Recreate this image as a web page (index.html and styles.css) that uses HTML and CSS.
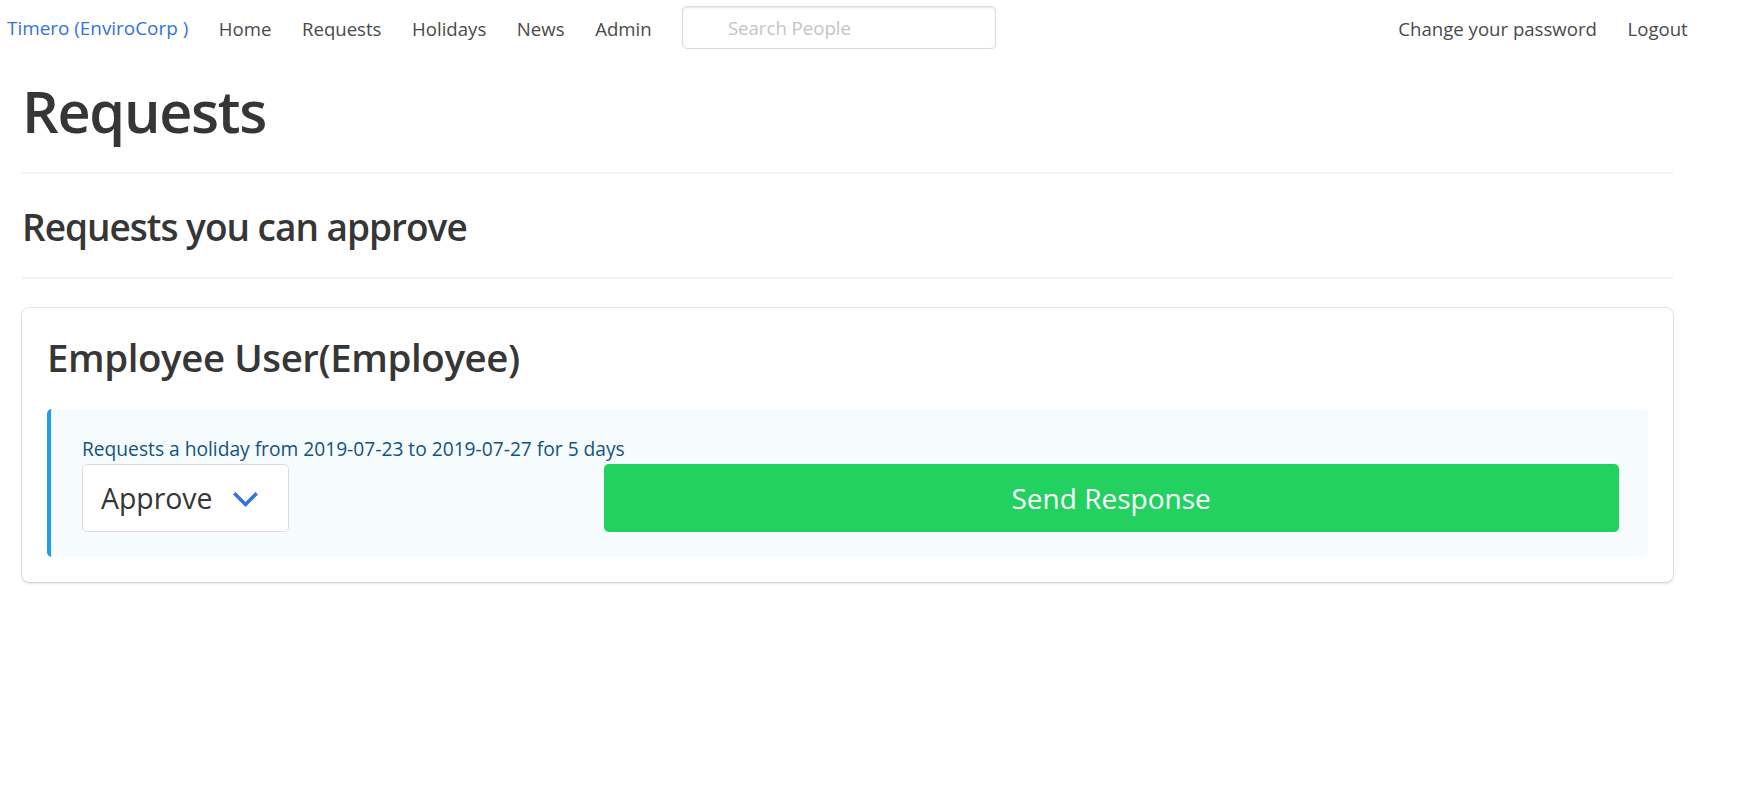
FILE: index.html
```html
<!DOCTYPE html>
<html lang="en">
<head>
<meta charset="utf-8">
<title>Requests</title>
<link rel="stylesheet" href="styles.css">
</head>
<body>
<nav class="navbar">
  <div class="navbar-start">
    <a class="navbar-brand" href="#">Timero (EnviroCorp )</a>
    <a class="navbar-item" href="#">Home</a>
    <a class="navbar-item" href="#">Requests</a>
    <a class="navbar-item" href="#">Holidays</a>
    <a class="navbar-item" href="#">News</a>
    <a class="navbar-item" href="#">Admin</a>
    <div class="search-wrap">
      <input class="search-input" type="text" placeholder="Search People">
    </div>
  </div>
  <div class="navbar-end">
    <a class="navbar-item" href="#">Change your password</a>
    <a class="navbar-item" href="#">Logout</a>
  </div>
</nav>

<main class="page">
  <h1 class="title-main">Requests</h1>
  <hr class="divider">
  <h2 class="title-sub">Requests you can approve</h2>
  <hr class="divider">

  <section class="box">
    <h3 class="box-title">Employee User(Employee)</h3>
    <div class="message">
      <p class="message-text">Requests a holiday from 2019-07-23 to 2019-07-27 for 5 days</p>
      <div class="response-row">
        <div class="select-cell">
          <div class="select-wrap">
            <select class="select-input">
              <option>Approve</option>
              <option>Decline</option>
            </select>
            <svg class="select-arrow" width="27" height="17" viewBox="0 0 27 17" aria-hidden="true">
              <polyline points="2.3,2.3 13.5,13.5 24.7,2.3" fill="none" stroke="#3273dc" stroke-width="3.5" stroke-linejoin="miter" stroke-linecap="butt"/>
            </svg>
          </div>
        </div>
        <button class="send-button" type="button">Send Response</button>
      </div>
    </div>
  </section>
</main>
</body>
</html>
```
FILE: styles.css
```css
* {
  box-sizing: border-box;
}

html, body {
  margin: 0;
  padding: 0;
  background: #ffffff;
}

body {
  font-family: "Open Sans", "Noto Sans", "Liberation Sans", sans-serif;
  font-size: 19.2px;
  color: #4a4a4a;
  line-height: 1.5;
}

a {
  text-decoration: none;
}

/* ---------- navbar ---------- */
.navbar {
  display: flex;
  align-items: center;
  justify-content: space-between;
  height: 55px;
  padding: 0 41px 0 0;
}

.navbar-start,
.navbar-end {
  display: flex;
  align-items: center;
  height: 100%;
}

.navbar-brand {
  color: #3273dc;
  font-size: 18.9px;
  padding: 2px 15.3px 0 7px;
  line-height: 55px;
}

.navbar-item {
  color: #4a4a4a;
  font-size: 18.6px;
  padding: 2px 15.3px 0;
  line-height: 55px;
}

.search-wrap {
  padding: 0 0 0 15px;
  display: flex;
  align-items: center;
}

.search-input {
  width: 314px;
  height: 43px;
  border: 1px solid #dbdbdb;
  border-radius: 4.8px;
  box-shadow: inset 0 1px 2px rgba(10, 10, 10, 0.1);
  font-family: inherit;
  font-size: 18.6px;
  color: #363636;
  padding: 0 12px 0 45px;
  outline: none;
}

.search-input::placeholder {
  color: #c4c4c4;
}

/* ---------- page ---------- */
.page {
  padding: 0 71px 40px 22px;
}

.title-main {
  margin: 23.5px 0 0 0;
  font-size: 57.6px;
  font-weight: 600;
  line-height: 1.125;
  color: #363636;
  letter-spacing: -1.3px;
}

.divider {
  border: none;
  height: 2px;
  background: #f3f3f3;
  margin: 28.7px 0 0 0;
}

.title-sub {
  margin: 31px 0 0 0;
  font-size: 37px;
  font-weight: 600;
  line-height: 43.2px;
  color: #363636;
  letter-spacing: -1px;
}

.title-sub + .divider {
  margin-top: 28.6px;
}

/* ---------- box ---------- */
.box {
  margin-top: 29px;
  background: #ffffff;
  border-radius: 7.2px;
  box-shadow: 0 2px 3px rgba(10, 10, 10, 0.1), 0 0 0 1px rgba(10, 10, 10, 0.1);
  padding: 28px 25px 25px 25px;
}

.box-title {
  margin: 0 0 29.6px 0;
  font-size: 38.4px;
  font-weight: 600;
  line-height: 1.125;
  color: #363636;
  letter-spacing: -0.4px;
}

.message {
  background: #f6fbfe;
  border-left: 4px solid #209cee;
  border-radius: 4.8px;
  padding: 26.5px 29.5px 25px 31px;
}

.message-text {
  margin: 0;
  font-size: 19.2px;
  line-height: 28.8px;
  color: #12537e;
}

.response-row {
  display: grid;
  grid-template-columns: calc((100% + 28.8px) / 3 - 28.8px) 1fr;
  column-gap: 28.8px;
  align-items: start;
}

.select-cell {
  display: flex;
}

.select-wrap {
  position: relative;
  width: 207px;
  height: 68px;
}

.select-input {
  appearance: none;
  -webkit-appearance: none;
  width: 100%;
  height: 100%;
  border: 1px solid #dbdbdb;
  border-radius: 4.8px;
  background: #ffffff;
  font-family: inherit;
  font-size: 28.4px;
  color: #363636;
  padding: 0 50px 0 18px;
  outline: none;
}

.select-arrow {
  position: absolute;
  left: 150px;
  top: 27px;
  pointer-events: none;
}

.send-button {
  height: 68px;
  width: 100%;
  border: none;
  border-radius: 4.8px;
  background: #23d160;
  color: #ffffff;
  font-family: inherit;
  font-size: 28px;
  cursor: pointer;
}
```
